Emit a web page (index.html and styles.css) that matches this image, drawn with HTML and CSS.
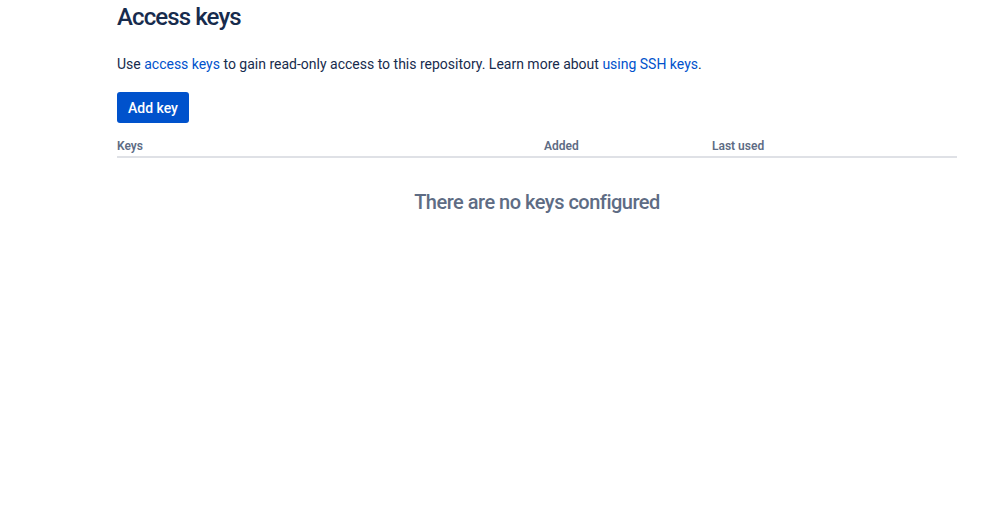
FILE: index.html
```html
<!DOCTYPE html>
<html lang="en">

<head>
    <meta charset="UTF-8">
    <meta name="viewport" content="width=device-width, initial-scale=1.0">
    <title>Access keys</title>
    <link rel="stylesheet" href="styles.css">
</head>

<body>
    <div class="page">
        <h1 class="page-title">Access keys</h1>
        <p class="intro">
            Use <a href="#">access keys</a> to gain read-only access to this repository. Learn more about <a href="#">using SSH keys</a>.
        </p>
        <button type="button" class="add-button">Add key</button>

        <table class="keys-table">
            <thead>
                <tr>
                    <th class="col-keys">Keys</th>
                    <th class="col-added">Added</th>
                    <th class="col-used">Last used</th>
                </tr>
            </thead>
        </table>
        <div class="empty-state">There are no keys configured</div>
    </div>
</body>

</html>
```

FILE: styles.css
```css
body {
    font-family: Roboto, "Noto Sans", sans-serif;
    margin: 0;
    padding: 0;
    background-color: #fff;
    color: #172b4d;
}

.page {
    width: 840px;
    margin-left: 117px;
}

.page-title {
    font-size: 24px;
    font-weight: 500;
    letter-spacing: -0.9px;
    line-height: 28px;
    margin: 3px 0 0;
}

.intro {
    font-size: 14px;
    line-height: 20px;
    margin: 23px 0 0;
}

.intro a {
    color: #0052cc;
    text-decoration: none;
}

.add-button {
    display: block;
    margin-top: 18px;
    height: 31px;
    padding: 0 11px;
    background-color: #0052cc;
    color: #fff;
    border: none;
    border-radius: 3px;
    font-family: inherit;
    font-size: 14px;
    font-weight: 500;
    cursor: pointer;
}

.keys-table {
    width: 100%;
    border-collapse: collapse;
    margin-top: 13px;
}

.keys-table th {
    text-align: left;
    font-size: 12px;
    font-weight: 600;
    color: #5e6c84;
    padding: 3px 0 3px;
    border-bottom: 2px solid #dfe1e6;
}

.col-keys {
    width: 427px;
}

.col-added {
    width: 168px;
}

.empty-state {
    text-align: center;
    font-size: 20px;
    font-weight: 500;
    letter-spacing: -0.5px;
    color: #5e6c84;
    margin-top: 32px;
}
```
